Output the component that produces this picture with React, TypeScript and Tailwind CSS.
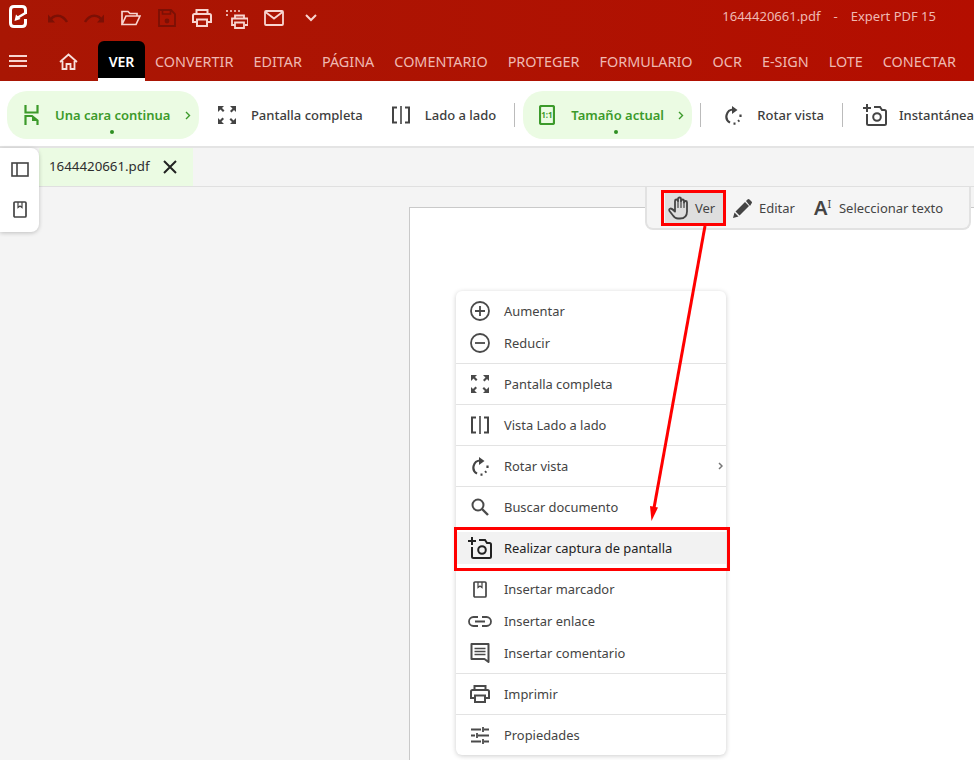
import type { ReactNode } from "react";

const font = { fontFamily: '"Noto Sans", "Open Sans", sans-serif' };

const navItems = ["CONVERTIR", "EDITAR", "PÁGINA", "COMENTARIO", "PROTEGER", "FORMULARIO", "OCR", "E-SIGN", "LOTE", "CONECTAR"];

function Icon({ size = 20, w, h, box = "0 0 24 24", className = "", children }: { size?: number; w?: number; h?: number; box?: string; className?: string; children: ReactNode }) {
  return (
    <svg width={w ?? size} height={h ?? size} viewBox={box} fill="none" stroke="currentColor" strokeWidth="2" className={`shrink-0 ${className}`}>
      {children}
    </svg>
  );
}

const FullIcon = () => (
  <Icon w={18} h={18} box="0 0 18 18">
    <path d="M0 0h6L4 2l2.500 2.500-1.500 1.500L2.500 3.500 0 6zM18 0v6l-2-2-2.500 2.500L12 5l2.500-2.500L12 0zM0 18v-6l2 2 2.500-2.500L6 13l-2.500 2.500L6 18zM18 18h-6l2-2-2.500-2.500L13 12l2.500 2.500L18 12z" fill="currentColor" stroke="none" />
  </Icon>
);
const SideIcon = () => (
  <Icon w={18} h={18} box="0 0 18 18" className="text-[#444]">
    <path d="M5 1.500H1v15h4M13 1.500h4v15h-4" strokeWidth="2" />
    <path d="M9 0v18" strokeWidth="1.600" />
  </Icon>
);
const RotateIcon = () => (
  <Icon w={17} h={19} box="0 0 17 19" className="text-[#444]">
    <path d="M8.500 3.500A7 7 0 0 0 5 16.600" strokeWidth="2.200" />
    <path d="M7 0l5.500 4L7 8z" fill="currentColor" stroke="none" />
    <path d="M15.500 8.500v2.500M14.300 14.300l-1.200 1.200M10.500 17.600H8.500" strokeWidth="2.200" />
  </Icon>
);
const CameraIcon = ({ className = "text-[#444]" }: { className?: string }) => (
  <Icon w={24} h={22} box="0 0 24 22" className={className}>
    <path d="M4 0v8M0 4h8" strokeWidth="2" />
    <path d="M4 10v9.500q0 1.500 1.500 1.500h16q1.500 0 1.500-1.500V7.500Q23 6 21.500 6H19l-2-3h-6" strokeWidth="2" />
    <circle cx="14" cy="13" r="3.800" strokeWidth="2" />
  </Icon>
);
const BookmarkIcon = () => (
  <Icon w={14} h={17} box="0 0 14 17" className="text-[#444]">
    <rect x="1" y="1" width="12" height="15" rx="1" strokeWidth="1.700" />
    <path d="M5 1v5.500l2-1.500 2 1.500V1" strokeWidth="1.200" />
  </Icon>
);
const PrintIcon = ({ className = "" }: { className?: string }) => (
  <Icon w={20} h={18} box="0 0 20 18" className={className}>
    <path d="M4.500 5V1h11v4M4.500 13H1V6.500Q1 5 2.500 5h15Q19 5 19 6.500V13h-3.500" strokeWidth="2" />
    <rect x="5" y="10.500" width="10" height="6.500" strokeWidth="2" />
  </Icon>
);

function ToolItem({ icon, label }: { icon: ReactNode; label: string }) {
  return (
    <div className="flex items-center text-[13px] font-medium text-[#3d3d3d]">
      {icon}
      <span className="pt-[2px]">{label}</span>
    </div>
  );
}

function Pill({ icon, label, width, dotLeft }: { icon: ReactNode; label: string; width: string; dotLeft: string }) {
  return (
    <div className={`relative flex h-12 items-center rounded-[20px] bg-[#ebfbe3] text-[13px] font-semibold text-[#3c9a2b] ${width}`}>
      {icon}
      <span className="pt-[2px]">{label}</span>
      <svg width="6" height="9" viewBox="0 0 6 9" fill="none" stroke="currentColor" strokeWidth="1.400" className="ml-auto mr-[8px]">
        <path d="M1 1l3.500 3.500L1 8" />
      </svg>
      <span className={`absolute top-[39px] h-1 w-1 rounded-full bg-[#2f8f22] ${dotLeft}`} />
    </div>
  );
}

function MenuGroup({ children, last }: { children: ReactNode; last?: boolean }) {
  return <div className={`py-1 ${last ? "" : "border-b border-[#e3e3e3]"}`}>{children}</div>;
}

function MenuRow({ icon, label, active, arrow }: { icon: ReactNode; label: string; active?: boolean; arrow?: boolean }) {
  return (
    <div className={`relative flex h-8 items-center text-[12.9px] ${active ? "bg-[#f2f2f2] text-[#222]" : "text-[#444]"}`}>
      <div className={`flex w-12 justify-center ${active ? "text-[#222]" : "text-[#4a4a4a]"}`}>{icon}</div>
      <span className="pt-[2px]">{label}</span>
      {arrow && (
        <svg width="5" height="8" viewBox="0 0 5 8" fill="none" stroke="#777" strokeWidth="1.500" className="absolute right-[3px]">
          <path d="M1 1l3 3-3 3" />
        </svg>
      )}
    </div>
  );
}

export default function App() {
  return (
    <div className="relative flex h-[760px] w-[974px] flex-col overflow-hidden bg-[#f4f4f4]" style={font}>
      <div className="bg-gradient-to-r from-[#a81604] to-[#b40e00]">
        {/* quick access row */}
        <div className="flex h-[41px] items-center pl-[9px] pr-[38px]">
          <svg width="18" height="23" viewBox="0 0 18 23" fill="none" stroke="#fff" strokeWidth="3" className="mb-[9px]">
            <path d="M16.500 9V5q0-3.500-3.500-3.500H5Q1.500 1.500 1.500 5v13q0 3.500 3.500 3.500h8q3.500 0 3.500-3.500v-4" />
            <path d="M16.500 8L8 13" strokeWidth="2.600" />
            <path d="M5.500 16L7 9.500l4.500 4.500z" fill="#fff" stroke="none" />
          </svg>
          <div className="mb-[6px] ml-[21px] flex items-center text-[#7c1005]">
            <Icon w={20} h={12} box="0 0 20 12" >
              <path d="M1.500 9.500C5 2 14 1.500 19 10" strokeWidth="2.400" />
              <path d="M0 2.500l7 8H0z" fill="currentColor" stroke="none" />
            </Icon>
            <Icon w={20} h={12} box="0 0 20 12" className="ml-[16px]">
              <path d="M18.500 9.500C15 2 6 1.500 1 10" strokeWidth="2.400" />
              <path d="M20 2.500l-7 8h7z" fill="currentColor" stroke="none" />
            </Icon>
          </div>
          <div className="mb-[6px] ml-[17px] flex items-center">
            <Icon w={20} h={16} box="0 0 20 16" className="text-[#f8d5d0]">
              <path d="M1 14.500V1.500h6l2 2h7V6M1 14.500h14L19 6H5z" strokeWidth="1.700" />
            </Icon>
            <Icon w={18} h={18} box="0 0 18 18" className="ml-[17px] text-[#7c1005]">
              <path d="M1 1h12l4 4v12H1z" strokeWidth="1.800" />
              <path d="M4.500 1v4h8V1" strokeWidth="1.600" />
              <circle cx="9" cy="12" r="2.400" fill="currentColor" stroke="none" />
            </Icon>
            <PrintIcon className="ml-[16px] text-[#f8d5d0]" />
            <svg width="22" height="19" viewBox="0 0 22 19" fill="none" stroke="#f8d5d0" strokeWidth="1.800" className="ml-[14px] mt-[4px]">
              <path d="M1 0v8M4 1h12" strokeDasharray="2 2" strokeWidth="1.600" />
              <path d="M9 8V5.500h9V8M9 15H6V8.500h16V15h-3M9 12.500h9V18H9z" />
            </svg>
            <Icon w={20} h={16} box="0 0 20 16" className="ml-[16px] text-[#f8d5d0]">
              <rect x="1" y="1" width="18" height="14" rx="1" strokeWidth="1.800" />
              <path d="M1.500 2l8.500 6.500L18.500 2" strokeWidth="1.800" />
            </Icon>
            <svg width="12" height="8" viewBox="0 0 12 8" fill="none" stroke="#f8d5d0" strokeWidth="2" className="ml-[21px]">
              <path d="M1 1l5 5 5-5" />
            </svg>
          </div>
          <div className="mb-[7px] ml-auto text-[13px] text-[#efb9b2]">
            <span>1644420661.pdf</span>
            <span className="ml-[13px]">-</span>
            <span className="ml-[13px]">Expert PDF 15</span>
          </div>
        </div>
        {/* ribbon tabs */}
        <div className="flex h-10 items-center pl-[9px]">
          <svg width="18" height="12" viewBox="0 0 18 12" fill="none" stroke="#f8d5d0" strokeWidth="1.800">
            <path d="M0 1h18M0 6h18M0 11h18" />
          </svg>
          <svg width="19" height="17" viewBox="0 0 19 17" fill="none" stroke="#f8e0dc" strokeWidth="1.800" className="ml-8">
            <path d="M1 9l8.500-7.500L18 9M3.500 8v8h4v-5h4v5h4V8" />
          </svg>
          <div className="ml-[20px] flex h-10 w-[47px] items-center justify-center rounded-t-[6px] border-b-[3px] border-white bg-black pt-[3px] text-[14px] font-semibold text-white">VER</div>
          <div className="ml-[10px] flex gap-[20px] pt-[1px] text-[14.4px] text-[#efb9b2]">
            {navItems.map((item) => (
              <span key={item}>{item}</span>
            ))}
          </div>
        </div>
      </div>

      {/* toolbar */}
      <div className="flex h-[67px] items-center whitespace-nowrap border-b-2 border-[#e4e4e4] bg-white pl-[7px] pt-[3px]">
        <Pill
          width="w-[193px]"
          dotLeft="left-[103px]"
          label="Una cara continua"
          icon={
            <svg width="15" height="20" viewBox="0 0 15 20" fill="none" stroke="#3c9a2b" strokeWidth="2.200" className="ml-[17px] mr-[16px]">
              <path d="M1.500 0v7.500h12V0M1.500 20v-9h6.500l5.500 4.500V20" />
              <path d="M8 11l6 5H8z" fill="#3c9a2b" stroke="none" />
            </svg>
          }
        />
        <div className="ml-[19px]">
          <ToolItem icon={<span className="mr-[15px] text-[#444]"><FullIcon /></span>} label="Pantalla completa" />
        </div>
        <div className="ml-[29px]">
          <ToolItem icon={<span className="mr-[15px]"><SideIcon /></span>} label="Lado a lado" />
        </div>
        <div className="ml-[18px] mr-2 h-6 w-px bg-[#bbb]" />
        <Pill
          width="w-[170px]"
          dotLeft="left-[91px]"
          label="Tamaño actual"
          icon={
            <svg width="16" height="20" viewBox="0 0 16 20" className="ml-4 mr-4">
              <rect x="1" y="1" width="14" height="18" rx="1.500" fill="none" stroke="#3c9a2b" strokeWidth="2.200" />
              <text x="8" y="13" textAnchor="middle" fontSize="8" fontWeight="700" fill="#3c9a2b">1:1</text>
            </svg>
          }
        />
        <div className="ml-[8px] h-6 w-px bg-[#bbb]" />
        <div className="ml-[24px]">
          <ToolItem icon={<span className="mr-[15px]"><RotateIcon /></span>} label="Rotar vista" />
        </div>
        <div className="ml-[18px] h-6 w-px bg-[#bbb]" />
        <div className="ml-[20px]">
          <ToolItem icon={<span className="mr-[12px]"><CameraIcon /></span>} label="Instantánea" />
        </div>
      </div>

      {/* document tabs */}
      <div className="flex h-[39px] shrink-0 border-b-[1.500px] border-[#e0e0e0] bg-[#f4f4f4]">
        <div className="ml-[39px] flex w-[154px] items-center bg-[#ebfbe3] pl-[10px] text-[13.300px] text-[#2e2e2e]">
          <span>1644420661.pdf</span>
          <svg width="14" height="14" viewBox="0 0 14 14" stroke="#222" strokeWidth="2" className="ml-[13px]">
            <path d="M1 1l12 12M13 1L1 13" />
          </svg>
        </div>
      </div>

      {/* page */}
      <div className="ml-[409px] mt-[20px] flex-1 border-l border-t border-[#c9c9c9] bg-white" />

      {/* side panel */}
      <div className="absolute left-0 top-[148px] flex h-[84px] w-[39px] flex-col items-center gap-[24px] rounded-r-lg bg-white pt-[14px] shadow-[0_1px_4px_rgba(0,0,0,0.22)]">
        <svg width="18" height="15" viewBox="0 0 18 15" fill="none" stroke="#444" strokeWidth="1.600">
          <rect x="1" y="1" width="16" height="13" />
          <path d="M6 1v13" />
        </svg>
        <BookmarkIcon />
      </div>

      {/* view mode bar */}
      <div className="absolute left-[645px] top-[187px] flex h-[43px] w-[326px] items-center whitespace-nowrap rounded-b-lg border-2 border-t-0 border-[#e2e2e2] bg-[#f5f5f5] text-[13px] text-[#444]">
        <div className="ml-[18px] flex h-[33px] w-[61px] items-center bg-[#dedede] pl-[3px]">
          <svg width="22" height="24" viewBox="0 0 22 23" fill="none" stroke="#444" strokeWidth="1.800" strokeLinejoin="round" strokeLinecap="round">
            <path d="M7 12V4.500a1.500 1.500 0 0 1 3 0V2.500a1.500 1.500 0 0 1 3 0v2a1.500 1.500 0 0 1 3 0V6a1.500 1.500 0 0 1 3 0v9q0 7-7 7h-2q-3 0-5-3L1.500 14.500q-1-2 1-2.500 1.500 0 4.500 3z" />
            <path d="M10 4.500V11M13 4.500V11M16 6v5" strokeWidth="1.200" />
          </svg>
          <span className="ml-[5px] pt-[2px]">Ver</span>
        </div>
        <svg width="19" height="19" viewBox="0 0 19 19" className="ml-[7px] mt-[1px]">
          <path d="M0 19l1.500-5.500 4 4zM2.500 12.500L12 3l4 4-9.500 9.500zM13 2l1.500-1.500q1-1 2 0l2 2q1 1 0 2L17 7z" fill="#444" />
        </svg>
        <span className="ml-[7px] pt-[2px]">Editar</span>
        <div className="ml-[19px] flex w-[19px] items-start">
          <span className="text-[20px] font-semibold leading-none text-[#444]">A</span>
          <span className="text-[11px] leading-none">I</span>
        </div>
        <span className="ml-[6px] pt-[2px]">Seleccionar texto</span>
      </div>

      {/* context menu */}
      <div className="absolute left-[456px] top-[291px] w-[270px] whitespace-nowrap rounded-md bg-white shadow-[0_1px_5px_rgba(0,0,0,0.2)]">
        <MenuGroup>
          <MenuRow label="Aumentar" icon={<svg width="20" height="20" viewBox="0 0 20 20" fill="none" stroke="currentColor" strokeWidth="1.800"><circle cx="10" cy="10" r="9" /><path d="M5 10h10M10 5v10" /></svg>} />
          <MenuRow label="Reducir" icon={<svg width="20" height="20" viewBox="0 0 20 20" fill="none" stroke="currentColor" strokeWidth="1.800"><circle cx="10" cy="10" r="9" /><path d="M5 10h10" /></svg>} />
        </MenuGroup>
        <MenuGroup><MenuRow label="Pantalla completa" icon={<FullIcon />} /></MenuGroup>
        <MenuGroup><MenuRow label="Vista Lado a lado" icon={<SideIcon />} /></MenuGroup>
        <MenuGroup><MenuRow label="Rotar vista" arrow icon={<RotateIcon />} /></MenuGroup>
        <MenuGroup>
          <MenuRow label="Buscar documento" icon={<svg width="18" height="18" viewBox="0 0 18 18" fill="none" stroke="currentColor" strokeWidth="2"><circle cx="7" cy="7" r="5.500" /><path d="M11 11l6 6" strokeWidth="2.400" /></svg>} />
        </MenuGroup>
        <MenuGroup><MenuRow active label="Realizar captura de pantalla" icon={<CameraIcon className="text-[#222]" />} /></MenuGroup>
        <MenuGroup>
          <MenuRow label="Insertar marcador" icon={<BookmarkIcon />} />
          <MenuRow label="Insertar enlace" icon={<svg width="24" height="11" viewBox="0 0 24 11" fill="none" stroke="currentColor" strokeWidth="1.800"><path d="M10 1H5.500a4.500 4.500 0 0 0 0 9H10M14 1h4.500a4.500 4.500 0 0 1 0 9H14M7 5.500h10" /></svg>} />
          <MenuRow label="Insertar comentario" icon={<svg width="20" height="20" viewBox="0 0 20 20" fill="none" stroke="currentColor" strokeWidth="2"><path d="M1.500 1h17v18l-4-3h-13z" strokeLinejoin="round" /><path d="M4.500 5.500h11M4.500 8.500h11M4.500 11.500h11" strokeWidth="1.500" /></svg>} />
        </MenuGroup>
        <MenuGroup><MenuRow label="Imprimir" icon={<PrintIcon />} /></MenuGroup>
        <MenuGroup last>
          <MenuRow label="Propiedades" icon={<svg width="18" height="17" viewBox="0 0 18 17" fill="none" stroke="currentColor" strokeWidth="1.800"><path d="M0 2.500h10M13 2.500h5M12 0v5M0 8.500h4M7 8.500h11M6 6v5M0 14.500h10M13 14.500h5M12 12v5" /></svg>} />
        </MenuGroup>
      </div>

      {/* annotation boxes and arrow */}
      <div className="absolute left-[661px] top-[190px] h-[36px] w-[65px] border-[3px] border-[#f00]" />
      <div className="absolute left-[454px] top-[527px] h-[44px] w-[276px] border-[3px] border-[#f00]" />
      <svg width="60" height="300" viewBox="0 0 60 300" className="absolute left-[650px] top-[224px]">
        <path d="M55 2L4 284" stroke="#f00" strokeWidth="3" fill="none" />
        <path d="M1.500 297L0 282 8 283.500z" fill="#f00" />
      </svg>
    </div>
  );
}
